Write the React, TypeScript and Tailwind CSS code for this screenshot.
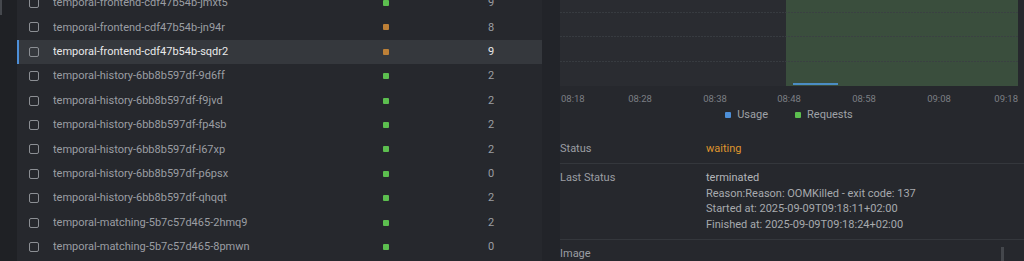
import React from 'react';

type Pod = { name: string; status: 'ok' | 'warn'; restarts: number; selected?: boolean };

const pods: Pod[] = [
  { name: 'temporal-frontend-cdf47b54b-jmxt5', status: 'ok', restarts: 9 },
  { name: 'temporal-frontend-cdf47b54b-jn94r', status: 'warn', restarts: 8 },
  { name: 'temporal-frontend-cdf47b54b-sqdr2', status: 'warn', restarts: 9, selected: true },
  { name: 'temporal-history-6bb8b597df-9d6ff', status: 'ok', restarts: 2 },
  { name: 'temporal-history-6bb8b597df-f9jvd', status: 'ok', restarts: 2 },
  { name: 'temporal-history-6bb8b597df-fp4sb', status: 'ok', restarts: 2 },
  { name: 'temporal-history-6bb8b597df-l67xp', status: 'ok', restarts: 2 },
  { name: 'temporal-history-6bb8b597df-p6psx', status: 'ok', restarts: 0 },
  { name: 'temporal-history-6bb8b597df-qhqqt', status: 'ok', restarts: 2 },
  { name: 'temporal-matching-5b7c57d465-2hmq9', status: 'ok', restarts: 2 },
  { name: 'temporal-matching-5b7c57d465-8pmwn', status: 'ok', restarts: 0 },
];

// x-axis ticks, positions relative to the plot's left edge
const ticks = [
  { label: '08:18', x: 1, anchor: 'start' },
  { label: '08:28', x: 80, anchor: 'middle' },
  { label: '08:38', x: 155, anchor: 'middle' },
  { label: '08:48', x: 229, anchor: 'middle' },
  { label: '08:58', x: 304, anchor: 'middle' },
  { label: '09:08', x: 379, anchor: 'middle' },
  { label: '09:18', x: 458, anchor: 'end' },
];

function PodRow({ pod }: { pod: Pod }) {
  return (
    <div
      className={`relative flex h-[24.4px] shrink-0 items-center ${
        pod.selected ? 'bg-[#35383d] text-[#e9e9ea]' : 'text-[#9b9ea3]'
      }`}
    >
      {pod.selected && <div className="absolute left-0 top-0 h-full w-[2px] bg-[#4d8fd8]" />}
      <div className="ml-[12px] h-[10px] w-[10px] shrink-0 rounded-[2px] border-[1.5px] border-[#8c8f94]" />
      <div className="ml-[14px] w-[330px] shrink-0 truncate">{pod.name}</div>
      <div className={`h-[6px] w-[6px] shrink-0 rounded-[1px] ${pod.status === 'ok' ? 'bg-[#5cbf4f]' : 'bg-[#bd8037]'}`} />
      <div className="ml-[99px]">{pod.restarts}</div>
    </div>
  );
}

function UsageChart() {
  return (
    <svg width="458" height="107" className="block shrink-0">
      <rect x="0" y="0" width="458" height="86" fill="#2a2c31" />
      <rect x="226" y="0" width="232" height="86" fill="#3a4e3d" />
      {[12, 36, 61].map(y => (
        <line key={y} x1="0" x2="458" y1={y + 0.5} y2={y + 0.5} stroke="#3b3f44" strokeWidth="1" strokeDasharray="2 1" opacity="0.8" />
      ))}
      <line x1="233" x2="278" y1="84" y2="84" stroke="#4b8dc4" strokeWidth="2" />
      {ticks.map(t => (
        <text
          key={t.label}
          x={t.x}
          y="101.5"
          textAnchor={t.anchor}
          fontSize="9.5"
          fill="#7c7f84"
          fontFamily="Roboto, sans-serif"
        >
          {t.label}
        </text>
      ))}
    </svg>
  );
}

export default function App() {
  return (
    <div className="flex h-[261px] w-[1024px] overflow-hidden bg-[#26282d] font-['Roboto',sans-serif] text-[11px] leading-[15.5px]">
      {/* Left sidebar strip */}
      <div className="relative w-[17px] shrink-0 bg-[#1f2125]">
        <div className="absolute left-0 top-0 h-[15px] w-[2px] bg-[#45484d]" />
      </div>

      {/* Pod list */}
      <div className="mt-[-9.2px] flex w-[525px] shrink-0 flex-col">
        {pods.map(pod => (
          <PodRow key={pod.name} pod={pod} />
        ))}
      </div>

      {/* Divider strip */}
      <div className="w-[18px] shrink-0 bg-[#222429]" />

      {/* Details panel */}
      <div className="flex min-w-0 flex-1 flex-col">
        <UsageChart />

        {/* Legend */}
        <div className="flex h-[16px] w-[458px] shrink-0 items-center justify-center gap-[27px] text-[#9fa2a7]">
          <div className="flex items-center gap-[6px]">
            <span className="h-[6px] w-[6px] rounded-[1px] bg-[#4d8fd8]" />
            <span>Usage</span>
          </div>
          <div className="flex items-center gap-[6px]">
            <span className="h-[6px] w-[6px] rounded-[1px] bg-[#5cbf4f]" />
            <span>Requests</span>
          </div>
        </div>

        {/* Properties */}
        <div className="mt-[11px] flex shrink-0 flex-col">
          <div className="flex shrink-0 border-b border-[#34373c] py-[6.5px]">
            <div className="w-[146px] shrink-0 text-[#9b9ea3]">Status</div>
            <div className="text-[#df952e]">waiting</div>
          </div>
          <div className="flex shrink-0 border-b border-[#34373c] py-[6.5px]">
            <div className="w-[146px] shrink-0 text-[#9b9ea3]">Last Status</div>
            <div className="flex flex-col text-[#a7aaae]">
              <span className="text-[#b3b5b9]">terminated</span>
              <span>Reason:Reason: OOMKilled - exit code: 137</span>
              <span>Started at: 2025-09-09T09:18:11+02:00</span>
              <span>Finished at: 2025-09-09T09:18:24+02:00</span>
            </div>
          </div>
          <div className="flex shrink-0 pt-[6px]">
            <div className="w-[146px] shrink-0 text-[#9b9ea3]">Image</div>
            <div className="ml-auto mr-[20px] mt-[1px] h-[20px] w-[3px] bg-[#44474c]" />
          </div>
        </div>
      </div>
    </div>
  );
}
